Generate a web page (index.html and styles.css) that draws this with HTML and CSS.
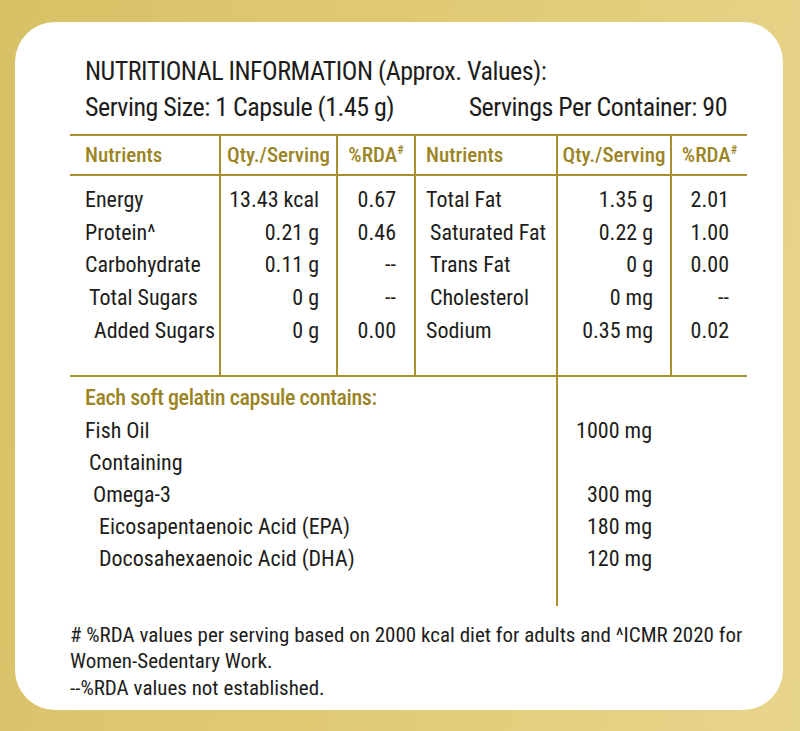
FILE: index.html
```html
<!DOCTYPE html>
<html lang="en">
<head>
<meta charset="utf-8">
<title>Nutritional Information</title>
<link rel="stylesheet" href="styles.css">
</head>
<body>
<main class="card">
  <header class="head">
    <h1 class="title">NUTRITIONAL INFORMATION (Approx. Values):</h1>
    <div class="serving">
      <span>Serving Size: 1 Capsule (1.45 g)</span>
      <span>Servings Per Container: 90</span>
    </div>
  </header>

  <table class="nut">
    <colgroup>
      <col class="c1"><col class="c2"><col class="c3"><col class="c4"><col class="c5"><col class="c6">
    </colgroup>
    <thead>
      <tr>
        <th class="name">Nutrients</th>
        <th>Qty./Serving</th>
        <th>%RDA<sup>#</sup></th>
        <th class="name r">Nutrients</th>
        <th>Qty./Serving</th>
        <th>%RDA<sup>#</sup></th>
      </tr>
    </thead>
    <tbody>
      <tr>
        <td class="name">Energy</td><td class="qty">13.43 kcal</td><td class="rda">0.67</td>
        <td class="name r">Total Fat</td><td class="qty">1.35 g</td><td class="rda">2.01</td>
      </tr>
      <tr>
        <td class="name">Protein^</td><td class="qty">0.21 g</td><td class="rda">0.46</td>
        <td class="name r i1">Saturated Fat</td><td class="qty">0.22 g</td><td class="rda">1.00</td>
      </tr>
      <tr>
        <td class="name">Carbohydrate</td><td class="qty">0.11 g</td><td class="rda">--</td>
        <td class="name r i1">Trans Fat</td><td class="qty">0 g</td><td class="rda">0.00</td>
      </tr>
      <tr>
        <td class="name i1">Total Sugars</td><td class="qty">0 g</td><td class="rda">--</td>
        <td class="name r i1">Cholesterol</td><td class="qty">0 mg</td><td class="rda">--</td>
      </tr>
      <tr>
        <td class="name i2">Added Sugars</td><td class="qty">0 g</td><td class="rda">0.00</td>
        <td class="name r">Sodium</td><td class="qty">0.35 mg</td><td class="rda">0.02</td>
      </tr>
    </tbody>
  </table>

  <table class="caps">
    <colgroup><col class="k1"><col class="k2"></colgroup>
    <tbody>
      <tr class="caps-head"><td class="label">Each soft gelatin capsule contains:</td><td class="amt"></td></tr>
      <tr><td class="label">Fish Oil</td><td class="amt">1000 mg</td></tr>
      <tr><td class="label j1">Containing</td><td class="amt"></td></tr>
      <tr><td class="label j2">Omega-3</td><td class="amt">300 mg</td></tr>
      <tr><td class="label j3">Eicosapentaenoic Acid (EPA)</td><td class="amt">180 mg</td></tr>
      <tr class="last"><td class="label j3">Docosahexaenoic Acid (DHA)</td><td class="amt">120 mg</td></tr>
    </tbody>
  </table>

  <footer class="notes">
    <p># %RDA values per serving based on 2000 kcal diet for adults and ^ICMR 2020 for Women-Sedentary Work.</p>
    <p>--%RDA values not established.</p>
  </footer>
</main>
</body>
</html>
```

FILE: styles.css
```css
html, body {
  margin: 0;
  height: 731px;
}

body {
  box-sizing: border-box;
  padding: 22px 17px 21px 15px;
  background: linear-gradient(100deg, #d7c166 0%, #dfc973 45%, #e8d58c 100%);
  font-family: "Roboto Condensed", "DejaVu Sans Condensed", sans-serif;
  color: #1d1d1b;
  overflow: hidden;
}

.card {
  box-sizing: border-box;
  height: 688px;
  background: #ffffff;
  border-radius: 40px;
  padding: 31px 0 0 55px;
}

.head {
  padding-left: 15px;
  width: 642px;
  white-space: nowrap;
}

.title {
  margin: 0;
  font-size: 26px;
  font-weight: 400;
  letter-spacing: -0.5px;
  line-height: 36px;
}

.serving {
  display: flex;
  justify-content: space-between;
  font-size: 26px;
  letter-spacing: -0.5px;
  line-height: 36px;
}

.nut, .caps {
  table-layout: fixed;
  border-collapse: collapse;
  width: 677px;
}

.nut {
  margin-top: 9px;
  border-top: 2px solid #a88f2f;
  border-bottom: 2px solid #a88f2f;
}

.c1 { width: 150px; }
.c2 { width: 117px; }
.c3 { width: 78px; }
.c4 { width: 142px; }
.c5 { width: 114px; }
.c6 { width: 76px; }

.nut th, .nut td {
  padding: 0;
  border-left: 2px solid #a88f2f;
  white-space: nowrap;
}

.nut th:first-child, .nut td:first-child {
  border-left: none;
}

.nut th {
  height: 38px;
  font-size: 21px;
  font-weight: 500;
  color: #9b8424;
  text-align: center;
  border-bottom: 2px solid #a88f2f;
}

.nut th.name { text-align: left; }

.nut th sup {
  font-size: 12px;
  vertical-align: 8px;
  line-height: 0;
}

.nut td {
  font-size: 22px;
  line-height: 32.7px;
}

.nut tbody tr:first-child td { padding-top: 8px; }
.nut tbody tr:last-child td { padding-bottom: 27px; }

.nut .name { text-align: left; padding-left: 15px; }
.nut .name.r { padding-left: 10px; }
.nut .name.i1 { padding-left: 19px; }
.nut .name.i2 { padding-left: 24px; }
.nut .name.r.i1 { padding-left: 14px; }

.nut .qty { text-align: right; padding-right: 17px; }
.nut .rda { text-align: right; padding-right: 18px; }

.k1 { width: 487px; }
.k2 { width: 190px; }

.caps td {
  padding: 0;
  font-size: 22px;
  line-height: 32px;
  white-space: nowrap;
}

.caps .amt {
  border-left: 2px solid #a88f2f;
  text-align: right;
  padding-right: 95px;
}

.caps .label { padding-left: 15px; }
.caps .label.j1 { padding-left: 19px; }
.caps .label.j2 { padding-left: 23px; }
.caps .label.j3 { padding-left: 29px; }

.caps-head td {
  padding-top: 4px;
  line-height: 34px;
}

.caps-head .label {
  color: #9b8424;
  font-weight: 500;
  letter-spacing: -0.4px;
}

.caps .last td { padding-bottom: 31px; }

.notes {
  margin-top: 16px;
  width: 680px;
  font-size: 21px;
  line-height: 26.5px;
}

.notes p {
  margin: 0;
}
```
